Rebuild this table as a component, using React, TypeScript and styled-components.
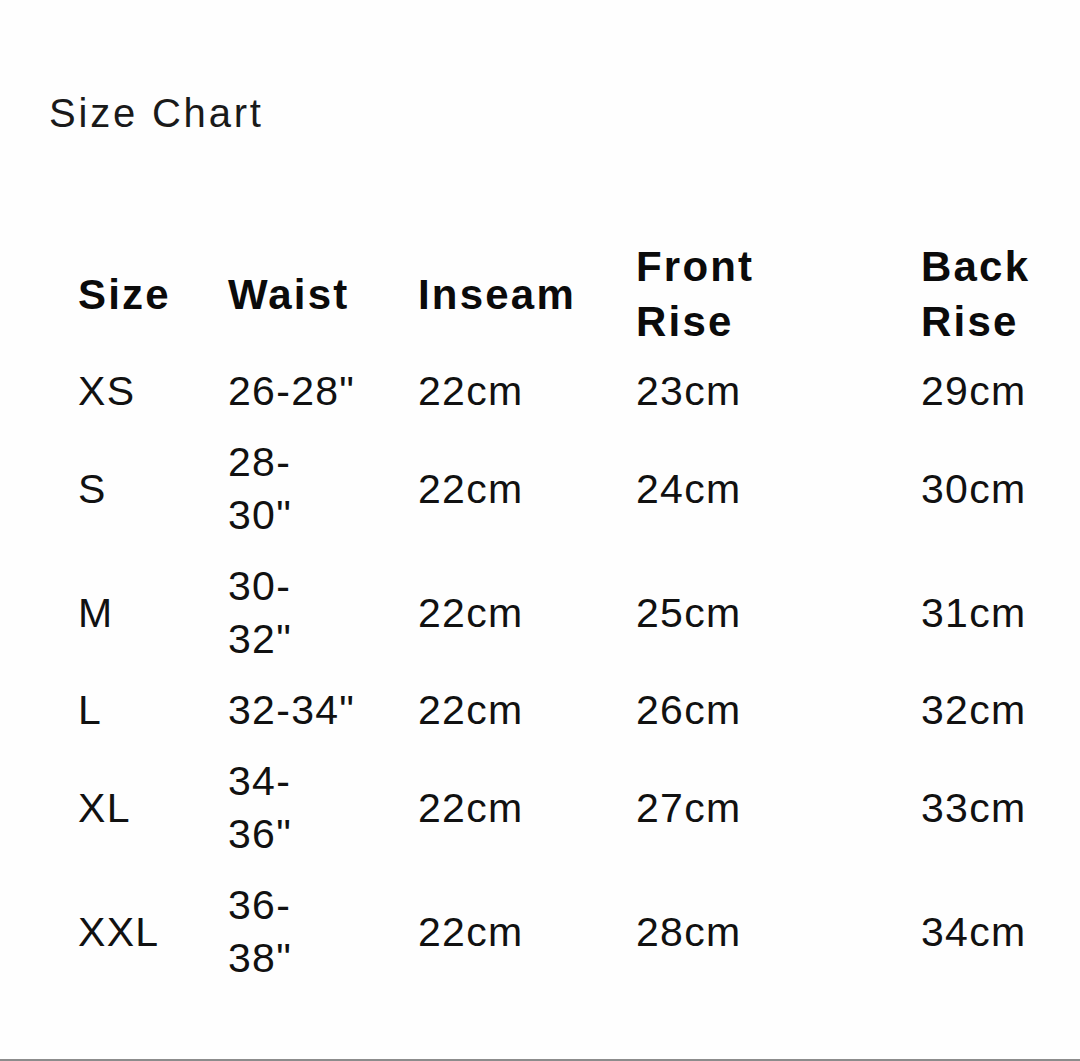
import React from "react";
import styled, { createGlobalStyle } from "styled-components";

interface SizeRow {
  size: string;
  waist: string;
  inseam: string;
  frontRise: string;
  backRise: string;
}

const rows: SizeRow[] = [
  { size: "XS", waist: '26-28"', inseam: "22cm", frontRise: "23cm", backRise: "29cm" },
  { size: "S", waist: '28-\n30"', inseam: "22cm", frontRise: "24cm", backRise: "30cm" },
  { size: "M", waist: '30-\n32"', inseam: "22cm", frontRise: "25cm", backRise: "31cm" },
  { size: "L", waist: '32-34"', inseam: "22cm", frontRise: "26cm", backRise: "32cm" },
  { size: "XL", waist: '34-\n36"', inseam: "22cm", frontRise: "27cm", backRise: "33cm" },
  { size: "XXL", waist: '36-\n38"', inseam: "22cm", frontRise: "28cm", backRise: "34cm" },
];

const columns = [
  { label: "Size", width: 150 },
  { label: "Waist", width: 190 },
  { label: "Inseam", width: 218 },
  { label: "Front\nRise", width: 285 },
  { label: "Back\nRise", width: 120 },
];

const App = () => {
  return (
    <>
      <GlobalStyle />
      <Page>
        <Title>Size Chart</Title>
        <Table>
          <colgroup>
            {columns.map((col) => (
              <col key={col.label} style={{ width: col.width }} />
            ))}
          </colgroup>
          <thead>
            <tr>
              {columns.map((col) => (
                <HeadCell key={col.label}>{col.label}</HeadCell>
              ))}
            </tr>
          </thead>
          <tbody>
            {rows.map((row) => (
              <tr key={row.size}>
                <Cell>{row.size}</Cell>
                <Cell>{row.waist}</Cell>
                <Cell>{row.inseam}</Cell>
                <Cell>{row.frontRise}</Cell>
                <Cell>{row.backRise}</Cell>
              </tr>
            ))}
          </tbody>
        </Table>
      </Page>
    </>
  );
};

const GlobalStyle = createGlobalStyle`
  html, body {
    margin: 0;
    padding: 0;
    background: #fefefe;
  }
  body {
    font-family: "Liberation Sans", Arial, sans-serif;
  }
`;

const Page = styled.div`
  box-sizing: border-box;
  height: 1061px;
  padding: 89px 0 0 49px;
  border-bottom: 2px solid #8c8c8c;
  overflow: hidden;
`;

const Title = styled.h1`
  margin: 0;
  font-size: 40px;
  line-height: 48px;
  font-weight: normal;
  letter-spacing: 2.8px;
  color: #1a1a1a;
`;

const Table = styled.table`
  width: 963px;
  margin: 95px 0 0 29px;
  border-collapse: collapse;
  table-layout: fixed;
  color: #111;
`;

const HeadCell = styled.th`
  padding: 7px 0;
  text-align: left;
  vertical-align: middle;
  white-space: pre-line;
  font-size: 42px;
  line-height: 55px;
  font-weight: bold;
  letter-spacing: 2.2px;
  color: #0b0b0b;
`;

const Cell = styled.td`
  padding: 9px 0;
  text-align: left;
  vertical-align: middle;
  white-space: pre-line;
  font-size: 41px;
  line-height: 53px;
  letter-spacing: 1.3px;
`;

export default App;
